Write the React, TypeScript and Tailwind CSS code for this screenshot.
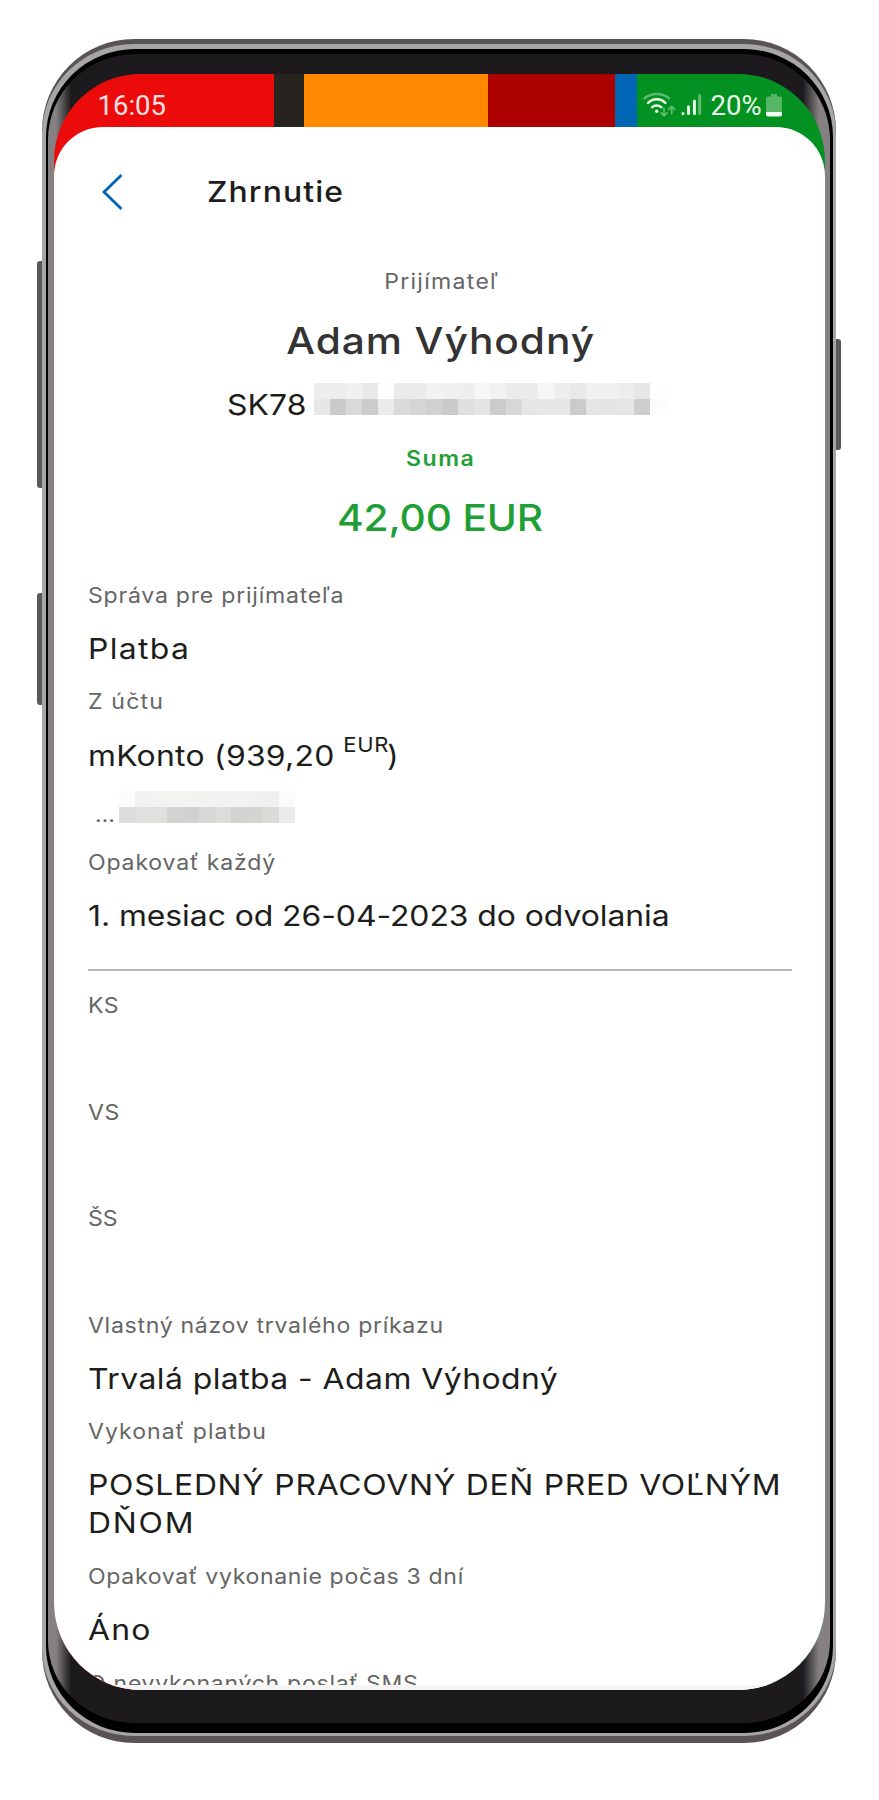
import type { ReactNode } from "react";

const ibanTop = ["#ededed", "#ededed", "#f0f0f0", "#e9e9e8", "#fdfdfd", "#ebebeb", "#ebebeb", "#f2f2f0", "#f0f0f0", "#eeeeee", "#f6f6f6", "#f1f1f1", "#ebebeb", "#ebebeb", "#f6f6f6", "#ededed", "#e9e9e8", "#f0f0f0", "#f0f0f0", "#ededed", "#e7e7e5", "#fefefc"];
const ibanBottom = ["#e7e7e6", "#cacaca", "#d9d9d9", "#cbcbca", "#ebebeb", "#dadad9", "#d5d5d4", "#d1d1d1", "#cacac9", "#dfdfde", "#e4e4e3", "#cbcbca", "#d7d7d6", "#e6e6e4", "#e7e7e5", "#e7e7e5", "#cbcbca", "#e5e5e4", "#e4e4e4", "#e6e6e4", "#cececd", "#fcfcfa"];
const accountTop = ["#fcfcfa", "#f1f1f1", "#f3f3f2", "#f3f3f2", "#f3f3f2", "#f1f1f0", "#f1f1f1", "#f2f2f1", "#f1f1f1", "#efeff0", "#fbfbf9"];
const accountBottom = ["#dcdcdc", "#e0e0df", "#e0e0df", "#d3d3d2", "#d1d1d1", "#d8d8d7", "#dcdcdb", "#d3d3d2", "#d4d4d3", "#dadad9", "#ebebeb"];

function Mosaic({ rows }: { rows: string[][] }) {
  return (
    <div>
      {rows.map((row, r) => (
        <div key={r} className="flex">
          {row.map((color, c) => (
            <div key={c} className="size-4 shrink-0" style={{ backgroundColor: color }} />
          ))}
        </div>
      ))}
    </div>
  );
}

function Label({ children, track = "tracking-[0.7px]" }: { children: ReactNode; track?: string }) {
  return (
    <div className={`h-[53.3px] origin-left scale-x-110 whitespace-nowrap text-[21px] leading-[53.3px] text-[#666664] ${track}`}>
      {children}
    </div>
  );
}

function Value({ children, track = "tracking-[0.5px]" }: { children?: ReactNode; track?: string }) {
  return (
    <div className={`h-[53.3px] origin-left scale-x-110 whitespace-nowrap text-[29px] leading-[53.3px] text-[#1d1d1b] ${track}`}>
      {children}
    </div>
  );
}

function StatusIcons() {
  return (
    <svg className="h-[30px] w-[66px]" viewBox="640 90 66 30" fill="none" stroke="#e9fbe9" strokeWidth="2.4" strokeLinecap="round">
      <path d="M643.5 98.3C650.5 92.6 661 92.6 668 98.3" opacity="0.4" />
      <path d="M647 103C652 98 659.5 98 664.5 103" />
      <path d="M651 107.3C653.7 104.9 657.8 104.9 660.5 107.3" />
      <circle cx="655.7" cy="111.2" r="1.7" fill="#e9fbe9" stroke="none" />
      <g opacity="0.4" strokeWidth="1.8">
        <path d="M663 108.5v7M660 112.8l3 3 3-3" />
        <path d="M670.7 113.5v-7M667.7 109.4l3-3 3 3" />
      </g>
      <g strokeWidth="3">
        <path d="M682 113.4v0.2M687.5 106.8v6.6M693.4 101v12.4" />
        <path d="M698.7 95.5v17.9" opacity="0.4" />
      </g>
    </svg>
  );
}

function Battery() {
  return (
    <svg className="h-[23px] w-4" viewBox="0 0 16 23">
      <path d="M5 0h6v2.5h3a2 2 0 0 1 2 2V18H0V4.5a2 2 0 0 1 2-2h3z" fill="#57b566" />
      <path d="M0 18h16v2.5a2 2 0 0 1-2 2H2a2 2 0 0 1-2-2z" fill="#f0fdf0" />
    </svg>
  );
}

function StatusBar() {
  return (
    <div className="flex h-[53.5px] shrink-0 font-['Roboto',sans-serif] text-[27.5px] leading-[64px]">
      <div className="w-[220.5px] bg-[#eb0b0b] pl-[44px] text-[#ffe0e0]">16:05</div>
      <div className="w-[30px] bg-[#27241f]" />
      <div className="w-[184px] bg-[#ff8800]" />
      <div className="w-[127px] bg-[#ad0000]" />
      <div className="w-[21.5px] bg-[#0066b3]" />
      <div className="flex flex-1 bg-[#039121] pl-[4px] text-[#e9fbe9]">
        <div className="w-[70px] pt-[16px]">
          <StatusIcons />
        </div>
        <span className="w-[55.5px]">20%</span>
        <div className="pt-[20px]">
          <Battery />
        </div>
      </div>
    </div>
  );
}

function Screen() {
  return (
    <div className="flex h-[1616.5px] w-[771px] flex-col overflow-hidden rounded-[87px] bg-[linear-gradient(90deg,#eb0b0b_50%,#039121_50%)]">
      <StatusBar />
      <main className="flex min-h-0 flex-1 flex-col overflow-hidden rounded-t-[49px] bg-white">
        <div className="min-h-0 flex-1 overflow-hidden">
          <header className="flex h-[128.2px] items-center pl-[47.5px] pt-px">
            <svg className="h-[38px] w-6" viewBox="0 0 24 38" fill="none" stroke="#0066b3" strokeWidth="2.8">
              <path d="M20.5 2L3 19L20.5 36" />
            </svg>
            <h1 className="ml-[82px] origin-left scale-x-110 text-[29px] font-medium tracking-[1px] text-[#1d1d1b]">Zhrnutie</h1>
          </header>

          <section className="whitespace-nowrap text-center">
            <div className="h-[53.3px] scale-x-110 pl-[4px] text-[21px] leading-[53.3px] tracking-[1.15px] text-[#666664]">Prijímateľ</div>
            <div className="h-[65px] scale-x-110 pl-[2px] text-[37px] font-medium leading-[65px] tracking-[0.84px] text-[#333333]">Adam Výhodný</div>
            <div className="flex h-[63px] pl-[173px]">
              <span className="w-[87px] origin-left scale-x-110 text-left text-[29px] leading-[63px] tracking-[0.1px] text-[#1d1d1b]">SK78</span>
              <div className="pt-[10px]">
                <Mosaic rows={[ibanTop, ibanBottom]} />
              </div>
            </div>
            <div className="h-[45px] scale-x-110 pl-[2px] text-[21px] font-semibold leading-[45px] tracking-[1.4px] text-[#1fa035]">Suma</div>
            <div className="h-[73.8px] scale-x-110 pl-[1px] text-[37px] font-medium leading-[73.8px] tracking-[-0.15px] text-[#1fa035]">42,00 EUR</div>
          </section>

          <section className="mt-[13.6px] pl-[34px] pr-[32.5px]">
            <Label track="tracking-[0.68px]">Správa pre prijímateľa</Label>
            <Value track="tracking-[1.2px]">Platba</Value>
            <Label track="tracking-[1.05px]">Z účtu</Label>
            <Value track="tracking-[0.22px]">
              mKonto (939,20 <span className="relative -top-[14px] -ml-[0.5px] -mr-[2px] text-[20px] tracking-[0.7px]">EUR</span>)
            </Value>
            <div className="flex h-[53.7px] items-start pl-[7px]">
              <span className="w-[24.5px] origin-left scale-x-110 text-[21px] leading-[66px] text-[#666664]">…</span>
              <div className="pt-[9px]">
                <Mosaic rows={[accountTop, accountBottom]} />
              </div>
            </div>
            <Label track="tracking-[0.72px]">Opakovať každý</Label>
            <Value track="tracking-[-0.06px]">1. mesiac od 26-04-2023 do odvolania</Value>
            <div className="flex h-[36.7px] flex-col pt-[27px]">
              <div className="h-[2px] bg-[#b7b7b7]" />
            </div>
            <Label track="tracking-[0.5px]">KS</Label>
            <Value />
            <Label track="tracking-[0.5px]">VS</Label>
            <Value />
            <Label track="tracking-normal">ŠS</Label>
            <Value />
            <Label track="tracking-[0.62px]">Vlastný názov trvalého príkazu</Label>
            <Value track="tracking-[0.4px]">Trvalá platba - Adam Výhodný</Value>
            <Label track="tracking-[0.9px]">Vykonať platbu</Label>
            <div className="h-[91.3px] origin-left scale-x-110 whitespace-nowrap pt-[7.6px] text-[29px] leading-[38px] text-[#1d1d1b]">
              <div className="tracking-[0.63px]">POSLEDNÝ PRACOVNÝ DEŇ PRED VOĽNÝM</div>
              <div className="tracking-[1.6px]">DŇOM</div>
            </div>
            <Label track="tracking-[0.58px]">Opakovať vykonanie počas 3 dní</Label>
            <Value track="tracking-[1.1px]">Áno</Value>
            <Label track="tracking-[0.63px]">O nevykonaných poslať SMS</Label>
          </section>
        </div>
        <div className="h-[5px] shrink-0 bg-[#f5f5f5]" />
      </main>
    </div>
  );
}

export default function App() {
  return (
    <div className="h-[1800px] w-[879px] overflow-hidden bg-white pl-[42px] pt-[39px] font-['Inter',sans-serif]">
      <div className="relative w-[794px]">
        <div className="absolute -left-[5px] top-[222px] h-[227px] w-[5px] rounded-l-[3px] bg-[#5b5859]" />
        <div className="absolute -left-[5px] top-[554px] h-[112px] w-[5px] rounded-l-[3px] bg-[#5b5859]" />
        <div className="absolute -right-[5px] top-[300px] h-[111px] w-[5px] rounded-r-[3px] bg-[#5b5859]" />
        <div className="h-[1704px] rounded-[92px] bg-[#5a5355] pt-[5px]">
          <div className="h-[1692px] rounded-[92px_92px_92px_92px/90px_90px_88px_88px] bg-[#a6a6a6] px-[3.5px] pt-[5px]">
            <div className="h-[1683.5px] rounded-[89px_89px_89px_89px/88px_88px_87px_87px] bg-black px-[2.5px] pt-[5px]">
              <div className="h-[1668.5px] rounded-[87px_87px_87px_87px/86px_86px_82px_82px] bg-[linear-gradient(90deg,#858182_0px,#858182_8px,#1c1a1d_23px,#1c1a1d_755px,#858182_771px)] pl-[5.5px] pt-[19.5px]">
                <Screen />
              </div>
            </div>
          </div>
        </div>
      </div>
    </div>
  );
}
